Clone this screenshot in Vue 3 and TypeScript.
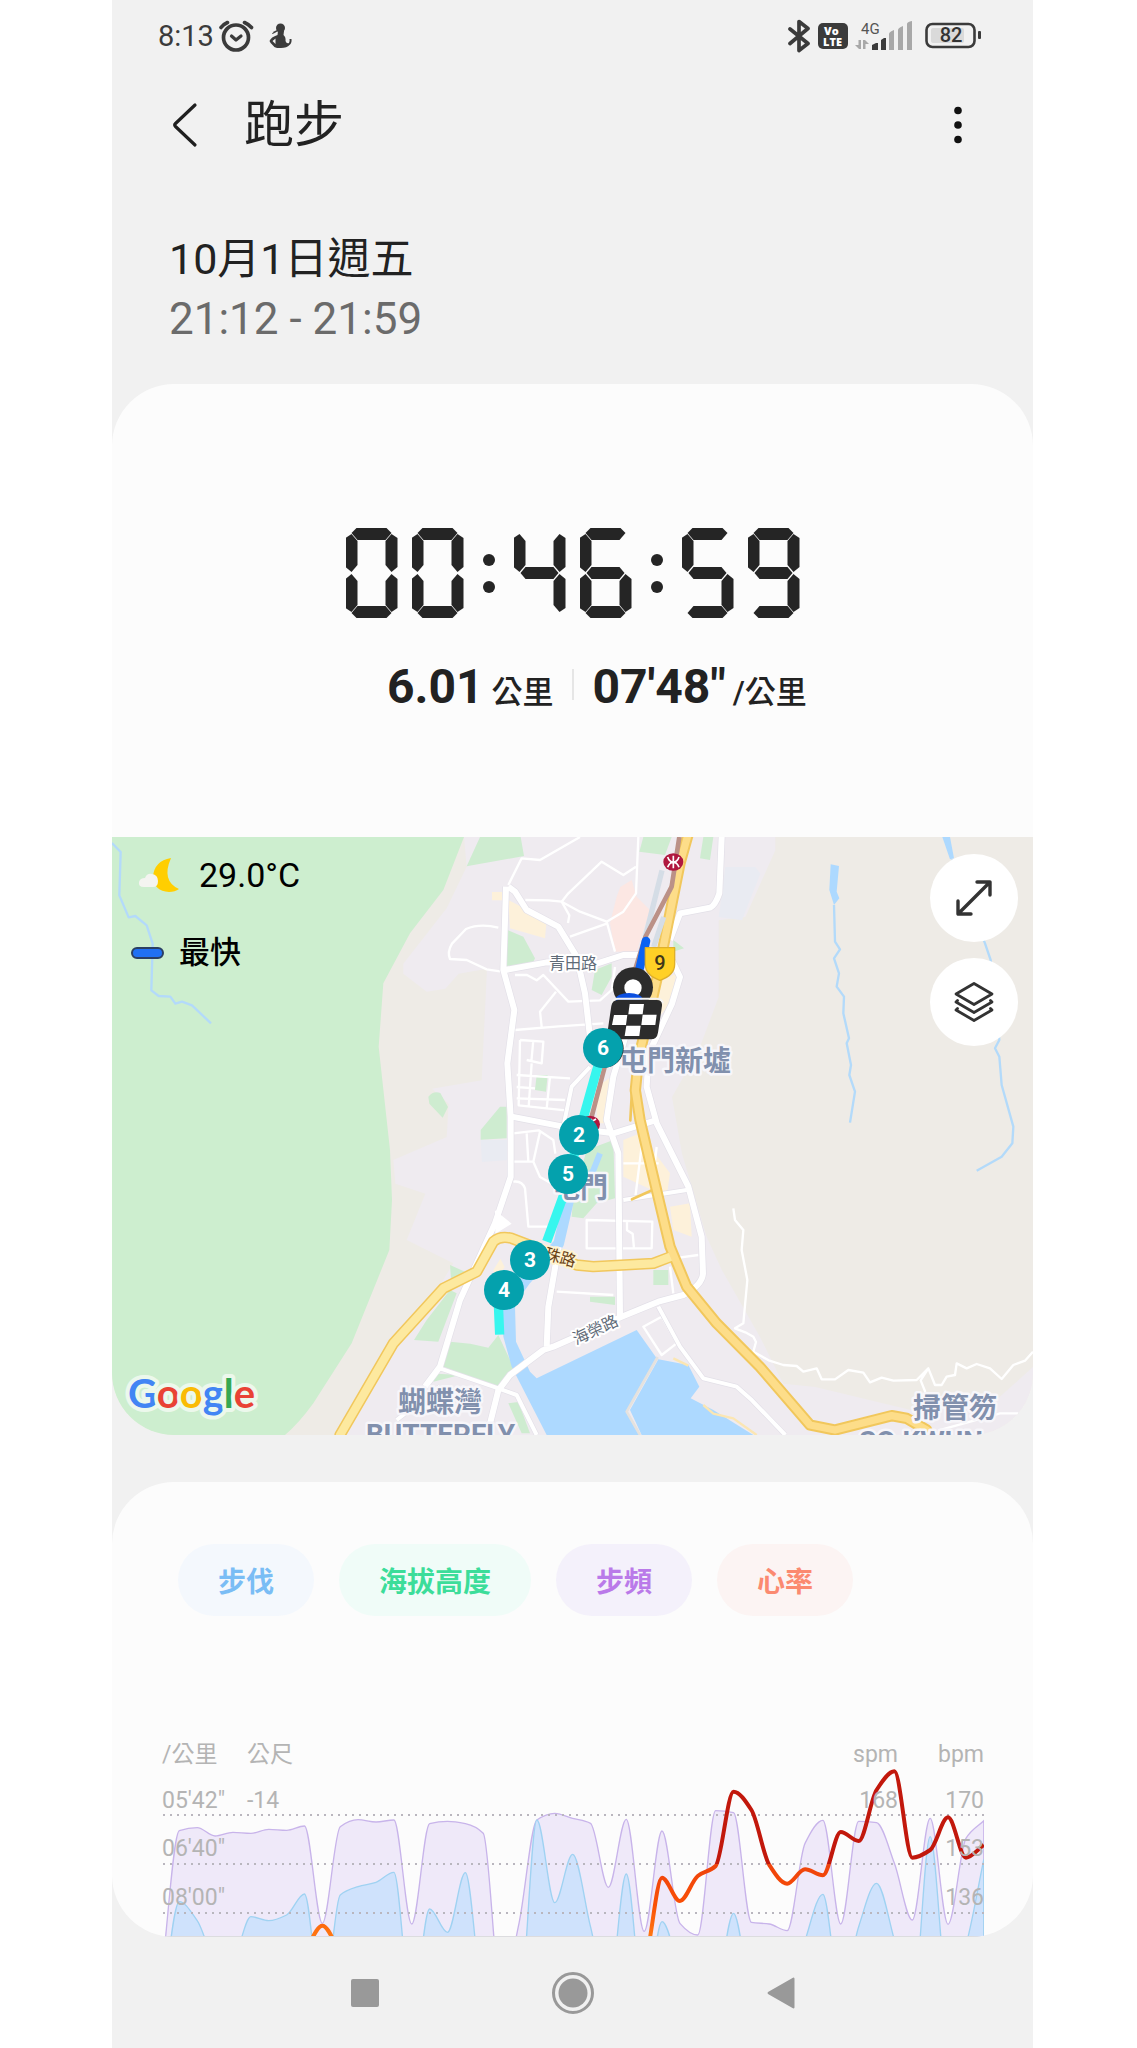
<script setup lang="ts">
import { computed } from 'vue'

/* Seven-segment clock: which bars are lit for each digit */
const LIT: Record<string, string> = {
  '0': 'abcdef',
  '1': 'bc',
  '2': 'abged',
  '3': 'abgcd',
  '4': 'fgbc',
  '5': 'afgcd',
  '6': 'afgedc',
  '7': 'abc',
  '8': 'abcdefg',
  '9': 'abcdfg',
}
const duration = '00:46:59'
const clock = computed(() =>
  duration.split('').map((ch) => ({ colon: ch === ':', bars: (LIT[ch] ?? '').split('') })),
)

const chips = [
  { label: '步伐', kind: 'pace' },
  { label: '海拔高度', kind: 'altitude' },
  { label: '步頻', kind: 'cadence' },
  { label: '心率', kind: 'heart' },
]

const markers = [
  { n: 2, x: 467, y: 298 },
  { n: 5, x: 456, y: 337 },
  { n: 6, x: 491, y: 211 },
  { n: 3, x: 418, y: 423 },
  { n: 4, x: 392, y: 453 },
]

const cadence = [
  800, 362, 353, 378, 367, 370, 358, 361, 348, 640, 350, 329, 336, 330, 642, 341, 334, 341, 370, 850,
  640, 330, 310, 325, 340, 532, 328, 664, 363, 640, 675, 302, 308, 637, 642, 662, 400, 331, 642, 334,
  338, 460, 630, 325, 643, 385, 332,
]
const pace = [
  900, 575, 632, 740, 740, 620, 632, 615, 552, 900, 555, 530, 517, 487, 900, 597, 667, 488, 860, 900,
  900, 330, 578, 433, 650, 860, 492, 900, 635, 780, 900, 850, 610, 850, 900, 900, 692, 553, 860, 650,
  520, 690, 900, 380, 850, 705, 448,
]
const heart = [
  800, 800, 800, 800, 800, 800, 800, 800, 727, 647, 727, 800, 800, 800, 800, 800, 800, 800, 800, 800,
  800, 800, 800, 800, 800, 800, 800, 760, 503, 573, 498, 468, 245, 300, 465, 521, 478, 496, 366, 393,
  240, 184, 443, 420, 322, 443, 405,
]

const STEP = 53.63
const START = 148.4

function curve(values: number[]): string {
  const n = values.length
  const slope: number[] = []
  for (let i = 0; i < n - 1; i++) slope.push((values[i + 1] - values[i]) / STEP)
  const tan: number[] = [slope[0]]
  for (let i = 1; i < n - 1; i++) {
    const a = slope[i - 1]
    const b = slope[i]
    tan.push(a * b <= 0 ? 0 : (2 * a * b) / (a + b))
  }
  tan.push(slope[n - 2])
  let d = `M${START},${values[0]}`
  for (let i = 0; i < n - 1; i++) {
    const x = START + i * STEP
    const h = STEP / 3
    d += `C${(x + h).toFixed(1)},${(values[i] + tan[i] * h).toFixed(1)} ${(x + STEP - h).toFixed(1)},${(values[i + 1] - tan[i + 1] * h).toFixed(1)} ${(x + STEP).toFixed(1)},${values[i + 1]}`
  }
  return d
}
const close = ` V1000 H${START} Z`
const cadenceLine = curve(cadence)
const paceLine = curve(pace)
const heartLine = curve(heart)

const gridRows = [
  { y: 105, text: 98, pace: "05'42\"", alt: '-14', spm: '168', bpm: '170' },
  { y: 154, text: 146, pace: "06'40\"", alt: '', spm: '', bpm: '153' },
  { y: 203, text: 195, pace: "08'00\"", alt: '', spm: '', bpm: '136' },
]
</script>

<template>
  <div class="page">
    <div class="phone">
      <header class="status">
        <span class="time">8:13</span>
        <svg class="alarm" width="36" height="34" viewBox="0 0 36 34" fill="none" stroke="#3b3b3b" stroke-linecap="round">
          <circle cx="18" cy="18.500" r="12.500" stroke-width="3.700" />
          <path d="M13.500 17 L18 21 L23 17" stroke-width="3.200" stroke-linejoin="round" />
          <path d="M3 8.500 Q5 5.500 9.500 3.500 M26.500 3.500 Q31 5.500 33.500 8.500" stroke-width="3.600" />
        </svg>
        <svg class="bird" width="24" height="28" viewBox="0 0 24 28" fill="#3b3b3b">
          <circle cx="12.500" cy="6" r="4.500" />
          <path d="M10 9 H16 L15.500 13 Q18 15 17.500 19 Q18.500 22 21 21 Q22 19 21.500 17 L23.500 17 Q24 21 21.500 23 Q19 26 13 26 Q7 26.500 5.500 24 Q2 21 1.500 19 Q3 15 9.500 13 Z M4.500 19 L7.500 22 L7.500 16.500 Z" fill-rule="evenodd" />
          <path d="M4 11.500 Q6 9 10 7.500 L10 9 Q7 11 4.500 12 Z" />
        </svg>
        <span class="spacer"></span>
        <svg width="24" height="34" viewBox="0 0 24 34" fill="none" stroke="#3b3b3b" stroke-width="3.700" stroke-linejoin="round" stroke-linecap="round">
          <path d="M3 10 L21 24.500 L12 31.500 V2.500 L21 9.500 L3 24.500" />
        </svg>
        <svg width="30" height="26" viewBox="0 0 30 26">
          <rect width="30" height="26" rx="5" fill="#3b3b3b" />
          <text x="6" y="12" class="volte">Vo</text>
          <text x="5" y="23" class="volte">LTE</text>
        </svg>
        <svg class="signal" width="58" height="32" viewBox="0 0 58 32">
          <text x="6" y="14" class="net">4G</text>
          <g fill="#a8a8a8">
            <path d="M28 14 Q28 12 33 10 V30 H28 Z M37 10 Q37 8 42 6 V30 H37 Z M46 4 Q46 2 51 1 V30 H46 Z" transform="translate(6 0)" />
            <path d="M3.500 20 H6 V29 H4 L0 25 H3.500 Z M8 20 H10 L14 24 H10.500 V29 H8 Z" />
          </g>
          <g fill="#3b3b3b">
            <path d="M17 30 V25 L21 23 H23 V30 Z M26 30 V20 L29 18 H31 V30 Z" />
          </g>
        </svg>
        <svg class="battery" width="57" height="28" viewBox="0 0 57 28">
          <rect x="1.500" y="2" width="48" height="23" rx="6" fill="none" stroke="#3b3b3b" stroke-width="2.600" />
          <rect x="6" y="6" width="33" height="15" rx="2" fill="#dadada" />
          <rect x="53" y="9" width="3" height="8" rx="1" fill="#3b3b3b" />
          <text x="26" y="20" class="charge">82</text>
        </svg>
      </header>

      <div class="titlebar">
        <button class="icon-btn" type="button" aria-label="返回">
          <svg width="28" height="48" viewBox="0 0 28 48" fill="none" stroke="#1f1f1f" stroke-width="3.200" stroke-linecap="round" stroke-linejoin="round">
            <path d="M24 4 L4.500 22.500 Q3 24 4.500 25.500 L24 44" />
          </svg>
        </button>
        <h1>跑步</h1>
        <button class="icon-btn more" type="button" aria-label="更多選項">
          <svg width="12" height="40" viewBox="0 0 12 40" fill="#111">
            <circle cx="6" cy="5.500" r="3.800" />
            <circle cx="6" cy="20" r="3.800" />
            <circle cx="6" cy="34.500" r="3.800" />
          </svg>
        </button>
      </div>

      <div class="when">
        <p class="date">10月1日週五</p>
        <p class="span">21:12 - 21:59</p>
      </div>

      <section class="card summary">
        <div class="clock" role="img" :aria-label="duration">
          <template v-for="(c, i) in clock" :key="i">
            <div v-if="c.colon" class="colon"><i></i><i></i></div>
            <div v-else class="digit"><i v-for="b in c.bars" :key="b" :class="'bar-' + b"></i></div>
          </template>
        </div>
        <div class="stats">
          <p class="stat dist"><b>6.01</b><span>公里</span></p>
          <hr />
          <p class="stat pace"><b>07'48"</b><span>/公里</span></p>
        </div>

        <div class="map">
          <svg class="map-art" viewBox="0 0 921 598">
            <svg width="921" height="598" viewBox="0 0 2763 1794" fill="none" stroke-linejoin="round">
              <rect width="2763" height="1794" fill="#eeebe6" />
              <path fill="#efebf0" d="M1056,0 L1064,89 1004,214 874,380 874,410 944,464 1000,455 1040,410 1125,395 1109,730 960,755 1010,800 1004,900 844,969 850,1040 940,1070 884,1209 1024,1279 950,1400 854,1529 694,1794 H2763 V1590 L2640,1700 2400,1720 2110,1650 2014,1640 1944,1500 1830,1300 1784,1200 1710,950 1680,780 1760,640 1820,480 1820,250 1900,240 1990,40 1990,0Z" />
              <path fill="#e9ebf2" d="M1840,90 H1930 L1945,110 1890,250 1820,240Z M1106,909 H1190 V969 L1110,975Z" />
              <path fill="#cdeecf" d="M0,0 H1056 L994,159 894,289 814,439 800,629 834,939 840,1089 832,1239 719,1519 604,1699 Q560,1760 519,1794 H0Z" />
              <path fill="#ceecd0" d="M1104,0 H1226 L1236,57 1064,88Z M1594,0 H1679 L1659,54 1582,44Z M1774,0 H1804 L1794,69 1764,64Z M1186,279 L1234,299 1269,364 1260,384 1184,394Z M1499,379 V419 L1469,474 1439,459 1449,399Z M1684,309 L1716,334 1684,344Z M1274,714 H1307 L1302,764 1269,759Z M949,779 Q965,760 985,768 L1008,810 992,842 952,800Z M1106,879 L1164,809 H1184 V904 L1106,908Z M1424,939 L1504,909 1509,1084 1454,1099 1414,1144 1379,1139 1384,1079Z M1014,1284 L1059,1304 1054,1324 1018,1339Z M1014,1359 L1034,1369 979,1514 906,1509 944,1449Z M1014,1514 L1075,1520 1129,1532 1159,1494 1204,1590 1194,1630 1165,1654 994,1589Z M1624,1299 H1669 V1344 H1624Z M1434,1379 H1509 V1404 L1434,1394Z M1189,1699 L1219,1695 1254,1789 1229,1789Z M975,1610 L1044,1614 964,1634Z" />
              <path fill="#fce7e3" d="M1514,179 L1525,150 1559,129 1574,179 1614,219 1574,344 1509,344 1494,259Z" />
              <path fill="#fdf1da" d="M1189,189 L1304,249 1299,304 1194,274Z M1140,165 H1170 V190 H1140Z M1634,439 L1694,409 1674,499 1634,549Z M1534,909 L1584,889 1674,1009 1664,1079 1534,1019Z M1674,1109 L1734,1099 1739,1199 1684,1179Z M1454,749 L1499,719 1484,859 1454,859Z M1144,1300 L1165,1265 1178,1290 1150,1330Z" />
              <g stroke="#fff" stroke-width="7">
                <path d="M1189,144 L1229,64 1284,69 1404,0" />
                <path d="M1579,0 L1572,169 1534,224 1484,254 1404,224 1349,194 1369,169 1469,74 1534,114 1572,89" />
                <path d="M1349,194 L1310,190 1240,189 M1349,194 L1372,235 1368,258 M1484,254 L1509,344 M1374,299 L1484,260" />
                <path d="M1159,272 Q1104,258 1062,276 L1020,320 Q1005,345 1014,366 L1064,369 1124,397 1164,403" />
                <path d="M1209,414 H1245 L1274,430 1294,414 1369,494 1464,490 1499,459 1509,390 M1332,464 L1284,524 1289,569 M1209,579 L1340,568 1474,559" />
                <path d="M1224,609 L1294,614 1289,679 1244,669 M1224,609 L1220,805 1360,820 M1264,609 L1258,675 M1214,714 L1374,724 M1214,750 L1269,754 M1214,784 L1359,789 M1259,679 L1250,810 M1314,719 L1304,815" />
                <path d="M1204,889 L1280,880 1324,909 1330,950 M1244,889 L1249,974 M1284,884 L1264,974 M1204,974 H1264 L1284,1020 1320,1040 M1204,1034 Q1230,1030 1239,1054 L1249,1169 H1310" />
                <path d="M1424,1149 L1621,1154 1619,1234 1424,1234Z M1545,1152 V1180 L1562,1190 1566,1234 M1334,1364 L1504,1374 M1594,1469 L1649,1439 1694,1519 1649,1554Z M1674,1289 L1684,1369 M1684,1264 L1759,1254 M1534,979 H1640 M1590,920 L1570,1080 M1634,930 L1620,1050" />
                <path d="M1864,1114 L1869,1149 1894,1179 1889,1239 1906,1329 1894,1459 1869,1474 1900,1486 1924,1499 1932,1515 1924,1544 1970,1570 2014,1584 2054,1587 2074,1604 2114,1594 2129,1627 2169,1627 2209,1599 2254,1607 2274,1636 2309,1622 2344,1631 2414,1629 2449,1594 2469,1644 2489,1644 2504,1619 2529,1614 2534,1579 2564,1594 2594,1581 2634,1594 2669,1626 2704,1584 2739,1571 2763,1544 M2449,1594 L2426,1630 2440,1665 M2480,1780 L2664,1729 2719,1729" />
              </g>
              <path fill="#add9ff" d="M1274,1624 L1574,1479 1634,1564 1544,1724 1584,1794 1304,1794 1199,1589 1174,1499 1168,1409 1209,1409 1212,1514 1254,1604Z M1639,1567 L1729,1584 1762,1649 1736,1684 1804,1719 1924,1794 1589,1794 1554,1719Z" />
              <path stroke="#e5e2de" stroke-width="8" d="M1637,1560 L1544,1724 1584,1794" />
              <path stroke="#fbe6b3" stroke-width="7" d="M1684,1564 L1729,1586 M1774,1704 L1804,1730 1864,1744 1934,1794" />
              <path stroke="#add9ff" stroke-width="32" d="M1370,1090 L1340,1220 1240,1330 1190,1400" />
              <path stroke="#add9ff" stroke-width="18" d="M1464,949 L1444,1000 1370,1090" />
              <path stroke="#b3dafa" stroke-width="7" d="M0,18 L26,45 22,175 50,241 70,237 104,265 122,320 118,460 140,477 175,479 190,500 210,494 240,505 297,559 M2166,204 L2169,314 2184,337 2166,364 2181,409 2174,449 2196,479 2194,529 2211,604 2204,619 2217,684 2212,714 2229,764 2214,857 M2520,67 L2619,319 2636,369 2662,609 2649,634 2662,659 2669,744 2704,869 2701,919 2669,959 2594,1001" />
              <path fill="#add9ff" d="M2156,82 L2181,87 2174,164 2182,184 2166,204 2152,159Z M2491,0 H2514 L2526,64 2514,67Z" />
              <g v-for="(tone, i) in ['#e3e0e8', '#ffffff']" :key="tone" :stroke="tone">
                <path :stroke-width="i ? 18 : 22" d="M1182,149 L1179,249 1174,399 1207,519 1186,679 1196,839 1196,1020 1149,1159 1044,1389 984,1589 939,1649 M1189,149 L1209,164 1244,219 1339,269 1394,359 1419,469 1434,600 M1179,399 L1304,376 1454,380 1534,354 1594,354 M1829,0 L1822,169 Q1810,205 1794,212 L1704,229 1674,309" />
                <path :stroke-width="i ? 18 : 22" d="M1129,1780 L1159,1660 1194,1614 1294,1539 1324,1529 1529,1439 1639,1394 1714,1374 Q1770,1345 1773,1310 L1769,1199 1729,1049 1634,859 1604,749 1610,650 1680,500 1704,420 1680,370 M1304,1529 L1309,1409 1340,1230 M1524,1439 L1519,949 1484,849 1504,719 1540,600 M1199,839 L1354,869 1504,889 1634,849" />
                <path :stroke-width="i ? 12 : 16" d="M984,1594 L1159,1654 1214,1674 1274,1794 M984,1649 L854,1749 M1434,690 L1379,749 1354,869 M1639,1409 L1704,1529 1774,1624 1874,1649 1920,1690 2020,1794 M1534,1089 L1724,1059" />
              </g>
              <path fill="#fff" d="M1149,1120 L1199,1160 1150,1190Z" />
              <g stroke-linecap="round">
                <path stroke="#f1c75c" stroke-width="34" d="M684,1794 L844,1519 994,1354 1094,1304 1144,1214 Q1165,1195 1199,1204 L1254,1225 1394,1284 1444,1289 1624,1279 1674,1260" />
                <path stroke="#f1c75c" stroke-width="34" d="M1729,-10 L1704,79 1664,279 1634,429 1600,579 1580,660 1570,760 1584,849 1624,1019 1674,1229 1724,1349 1814,1459 1944,1590 2094,1764 2169,1779 2339,1736 2384,1744 2444,1779" />
                <path stroke="#f1c75c" stroke-width="8" d="M1620,1060 L1560,1087 M1560,760 L1555,850" />
                <path stroke="#fde99f" stroke-width="25" d="M684,1794 L844,1519 994,1354 1094,1304 1144,1214 Q1165,1195 1199,1204 L1254,1225 1394,1284 1444,1289 1624,1279 1674,1260" />
                <path stroke="#fddd89" stroke-width="22" d="M1729,-10 L1704,79 1664,279 1634,429 1600,579 1580,660 1570,760 1584,849 1624,1019 1674,1229 1724,1349 1814,1459 1944,1590 2094,1764 2169,1779 2339,1736 2384,1744 2444,1779" />
              </g>
              <path stroke="#d5dde6" stroke-width="16" d="M1650,100 L1600,300 M1655,240 L1625,330" />
              <path stroke="#bb9187" stroke-width="14" d="M1702,0 L1679,149 1600,300 1478,690 1439,839" />
              <path stroke="#37f6ee" stroke-width="28" d="M1470,650 L1454,700 1412,850 1360,1060 1304,1214 M1159,1400 L1163,1493" />
              <path stroke="#0b62f2" stroke-width="26" stroke-linecap="round" d="M1602,312 L1584,390 1560,470" />
              <g>
                <ellipse cx="1684" cy="75" rx="30" ry="26" fill="#b0183f" />
                <path stroke="#fff" stroke-width="5" d="M1684,56 V94 M1667,60 Q1672,75 1684,75 Q1696,75 1701,60 M1667,91 Q1672,76 1684,76 Q1696,76 1701,91 M1674,75 H1694" />
                <ellipse cx="1434" cy="862" rx="30" ry="26" fill="#b0183f" />
                <path stroke="#fff" stroke-width="5" d="M1436,846 L1442,852 1452,846" />
              </g>
              <path fill="#ffd026" stroke="#dfb02a" stroke-width="4" d="M1600,332 H1688 V382 Q1688,415 1644,430 Q1600,415 1600,382Z" />
            </svg>

            <g class="place">
              <text x="507" y="234">屯門新墟</text>
              <text x="440" y="361">屯門</text>
              <text x="286" y="575">蝴蝶灣</text>
              <text x="801" y="581">掃管笏</text>
              <text x="254" y="607" class="latin">BUTTERFLY</text>
              <text x="747" y="614" class="latin">SO KWUN</text>
            </g>
            <text x="437" y="132" class="road">青田路</text>
            <text x="464" y="508" class="road" transform="rotate(-25 464 508)">海榮路</text>
            <text x="416" y="417" class="road brown" transform="rotate(16 416 417)">海珠路</text>
            <text x="548" y="133" class="route">9</text>

            <g transform="translate(368 -7) scale(0.3333)">
              <circle cx="459" cy="472" r="60" fill="#2c2c2c" />
              <circle cx="459" cy="474" r="26" fill="#fff" />
              <ellipse cx="447" cy="508" rx="40" ry="19" fill="#0b4fe0" />
              <path fill="none" stroke="#f4f4f4" stroke-width="6" d="M394,520 Q398,506 414,506 H530 Q546,506 549,520" />
              <path fill="#2c2c2c" d="M414,510 H530 Q548,510 546,528 L534,608 Q531,628 512,628 H398 Q380,628 382,610 L394,528 Q397,510 414,510Z" />
              <path fill="#fff" d="M449,522 H492 L488,553 H445Z M402,555 H442 L438,585 H396Z M488,554 H530 L526,585 H484Z M439,587 H482 L478,618 H434Z" />
              <circle cx="373" cy="655" r="58" fill="#2c2c2c" />
            </g>
            <g v-for="m in markers" :key="m.n">
              <circle :cx="m.x" :cy="m.y" r="20" fill="#04a1ad" />
              <text :x="m.x" :y="m.y + 7" class="km">{{ m.n }}</text>
            </g>
            <text x="16" y="571" class="google"><tspan fill="#4285f4">G</tspan><tspan fill="#e94235">o</tspan><tspan fill="#fabb05">o</tspan><tspan fill="#4285f4">g</tspan><tspan fill="#34a853">l</tspan><tspan fill="#e94235">e</tspan></text>
          </svg>

          <div class="weather">
            <svg width="42" height="36" viewBox="0 0 42 36">
              <path fill="#ffce00" d="M34 1 Q17 4 16 20 Q17 34 32 35 Q38 35 42 32 Q24 24 34 1Z" />
              <path fill="#f4f4f1" d="M7 30 Q1 30 2 25 Q3 21 8 21 Q10 16 15 17 Q21 18 21 24 Q21 30 16 30Z" />
            </svg>
            <span>29.0°C</span>
          </div>
          <div class="fastest"><i></i><span>最快</span></div>

          <div class="tools">
            <button type="button" aria-label="放大地圖">
              <svg width="40" height="40" viewBox="0 0 40 40" fill="none" stroke="#333" stroke-width="3.400" stroke-linecap="round" stroke-linejoin="round">
                <path d="M4 36 L36 4 M23 4 H36 V17 M17 36 H4 V23" />
              </svg>
            </button>
            <button type="button" aria-label="圖層">
              <svg width="42" height="42" viewBox="0 0 42 42" fill="none" stroke="#333" stroke-width="2.800" stroke-linecap="round" stroke-linejoin="round">
                <path d="M21 2.500 L39 13 L21 23.500 L3 13Z" />
                <path d="M4.500 19.500 L3 21 L21 31.500 L39 21 L37.500 19.500 M4.500 27.500 L3 29 L21 39.500 L39 29 L37.500 27.500" />
              </svg>
            </button>
          </div>
        </div>
      </section>

      <section class="card graph">
        <div class="chips">
          <button v-for="c in chips" :key="c.kind" type="button" :class="['chip', c.kind]">{{ c.label }}</button>
        </div>
        <svg class="chart" viewBox="0 0 921 227">
          <defs>
            <linearGradient id="zones" gradientUnits="userSpaceOnUse" x1="0" y1="184" x2="0" y2="684">
              <stop offset="0" stop-color="#c2180c" />
              <stop offset=".555" stop-color="#c2180c" />
              <stop offset=".556" stop-color="#ee430c" />
              <stop offset=".8" stop-color="#fa5006" />
              <stop offset="1" stop-color="#ff7a14" />
            </linearGradient>
          </defs>
          <svg x="0" y="0" width="872" height="227" viewBox="-6 0 2616 681" preserveAspectRatio="none" fill="none">
            <g transform="translate(-6 0)">
              <path :d="cadenceLine + close" fill="#efe9f9" stroke="#c8b4ea" stroke-width="4" />
              <path :d="paceLine + close" fill="#cfe2fc" stroke="#9fd2f2" stroke-width="4" />
            </g>
          </svg>
          <line v-for="r in gridRows" :key="r.y" x1="51" x2="872" :y1="r.y" :y2="r.y" class="dots" />
          <g class="axis">
            <text x="50" y="52">/公里</text>
            <text x="135" y="52">公尺</text>
            <text x="786" y="52" class="end">spm</text>
            <text x="872" y="52" class="end">bpm</text>
          </g>
          <svg x="0" y="0" width="872" height="227" viewBox="-6 0 2616 681" preserveAspectRatio="none" fill="none">
            <path transform="translate(-6 0)" :d="heartLine" stroke="url(#zones)" stroke-width="12" stroke-linejoin="round" />
          </svg>
          <g v-for="r in gridRows" :key="r.text" class="axis">
            <text x="50" :y="r.text">{{ r.pace }}</text>
            <text x="135" :y="r.text">{{ r.alt }}</text>
            <text x="786" :y="r.text" class="end">{{ r.spm }}</text>
            <text x="872" :y="r.text" class="end">{{ r.bpm }}</text>
          </g>
          <line x1="43" x2="880" y1="226.500" y2="226.500" stroke="#dcdcdf" />
        </svg>
      </section>

      <nav class="nav">
        <button type="button" aria-label="最近使用">
          <svg width="28" height="28" viewBox="0 0 28 28"><rect width="28" height="28" rx="2" fill="#999" /></svg>
        </button>
        <button type="button" aria-label="主畫面">
          <svg width="44" height="44" viewBox="0 0 44 44"><circle cx="22" cy="22" r="19.500" fill="none" stroke="#999" stroke-width="3" /><circle cx="22" cy="22" r="14.500" fill="#999" /></svg>
        </button>
        <button type="button" aria-label="返回上一頁">
          <svg width="28" height="32" viewBox="0 0 28 32"><path d="M27.500 1.500 V30.500 Q27 32 25.500 31 L1 17 Q0 16 1 15 L25.500 1 Q27 0 27.500 1.500Z" fill="#999" /></svg>
        </button>
      </nav>
    </div>
  </div>
</template>

<style>
body {
  margin: 0;
  background: #fff;
}
</style>

<style scoped>
.page {
  box-sizing: border-box;
  padding: 0 104px 0 112px;
  font-family: Roboto, "Noto Sans CJK TC", sans-serif;
  color: #222;
}
.phone {
  background: #f1f1f1;
}
p,
h1 {
  margin: 0;
}
button {
  padding: 0;
  border: 0;
  background: none;
  font: inherit;
  display: flex;
  align-items: center;
  justify-content: center;
}
svg {
  display: block;
  flex: none;
}

.status {
  display: flex;
  align-items: center;
  height: 72px;
  padding: 0 51px 0 46px;
}
.time {
  font-size: 29px;
  line-height: 36px;
  color: #3b3b3b;
}
.alarm {
  margin-left: 4px;
}
.bird {
  margin-left: 14px;
}
.spacer {
  flex: 1;
}
.status svg + svg {
  margin-left: 7px;
}
.status .alarm + .bird {
  margin-left: 14px;
}
.status .battery {
  margin-left: 12px;
}
.volte {
  font-size: 11px;
  font-weight: 800;
  font-family: "Open Sans", sans-serif;
  fill: #fff;
}
.net {
  font-size: 15px;
  fill: #555;
}
.charge {
  font-size: 20px;
  font-weight: 500;
  fill: #333;
  text-anchor: middle;
}

.titlebar {
  display: flex;
  align-items: center;
  height: 106px;
  padding: 0 53px 0 57px;
}
.icon-btn {
  width: 32px;
  height: 56px;
}
h1 {
  flex: 1;
  margin-left: 43px;
  font-size: 50px;
  line-height: 64px;
  font-weight: 400;
}
.icon-btn.more {
  width: 44px;
}

.when {
  padding: 51px 57px 35px;
  font-size: 44px;
  line-height: 60px;
}
.date {
  font-size: 43px;
}
.span {
  color: #6b6b6b;
}

.card {
  background: #fcfcfc;
  border-radius: 62px;
  overflow: hidden;
}
.summary {
  padding-top: 144px;
}

.clock {
  display: flex;
  justify-content: center;
  gap: 14px;
  height: 90px;
}
.digit {
  position: relative;
  width: 52px;
}
.digit i {
  position: absolute;
  left: 0;
  top: 0;
  width: 52px;
  height: 90px;
  background: #252525;
}
.bar-a {
  clip-path: polygon(6px 5px, 11px 0, 41px 0, 46px 5px, 40px 12px, 12px 12px);
}
.bar-f {
  clip-path: polygon(0 10px, 6px 6px, 12px 13px, 12px 37px, 6px 44px, 0 39px);
}
.bar-b {
  clip-path: polygon(52px 10px, 46px 6px, 40px 13px, 40px 37px, 46px 44px, 52px 39px);
}
.bar-g {
  clip-path: polygon(7px 45px, 12px 39px, 40px 39px, 45px 45px, 40px 51px, 12px 51px);
}
.bar-e {
  clip-path: polygon(0 80px, 6px 84px, 12px 77px, 12px 53px, 6px 46px, 0 51px);
}
.bar-c {
  clip-path: polygon(52px 80px, 46px 84px, 40px 77px, 40px 53px, 46px 46px, 52px 51px);
}
.bar-d {
  clip-path: polygon(6px 85px, 11px 90px, 41px 90px, 46px 85px, 40px 78px, 12px 78px);
}
.colon {
  display: flex;
  flex-direction: column;
  align-items: center;
  gap: 15px;
  width: 22px;
  padding-top: 26px;
}
.colon i {
  width: 12px;
  height: 12px;
  border-radius: 50%;
  background: #252525;
}

.stats {
  display: grid;
  grid-template-columns: 1fr 2px 1fr;
  margin-top: 41px;
  padding-bottom: 116px;
  line-height: 56px;
}
.stats hr {
  width: 2px;
  height: 31px;
  margin: 10px 0 0;
  border: 0;
  background: #e6e6e6;
}
.stat {
  display: flex;
  align-items: baseline;
}
.stat b {
  font-size: 48px;
  font-weight: 700;
}
.stat span {
  font-size: 31px;
  font-weight: 500;
}
.stat.dist {
  justify-content: flex-end;
  gap: 8px;
  padding-right: 18px;
}
.stat.pace {
  gap: 7px;
  padding-left: 19px;
}

.map {
  position: relative;
}
.map-art {
  width: 100%;
  height: auto;
}
.place text {
  font-size: 28px;
  font-weight: 700;
  fill: #8190ad;
  stroke: #f7f6fa;
  stroke-width: 5px;
  paint-order: stroke;
  stroke-linejoin: round;
}
.road {
  font-size: 16px;
  fill: #5f6b78;
  stroke: #fff;
  stroke-width: 4px;
  paint-order: stroke;
  stroke-linejoin: round;
}
.brown {
  fill: #6b4216;
  stroke: #fff4cf;
}
.route {
  font-size: 20px;
  font-weight: 500;
  fill: #40361a;
  text-anchor: middle;
}
.km {
  font-size: 21px;
  font-weight: 700;
  fill: #fff;
  text-anchor: middle;
}
.google {
  font-family: Lato, sans-serif;
  font-size: 40px;
  font-weight: 700;
  stroke: #ecf8ec;
  stroke-width: 8px;
  paint-order: stroke;
  stroke-linejoin: round;
}
.weather {
  position: absolute;
  left: 25px;
  top: 18px;
  display: flex;
  align-items: center;
  gap: 20px;
  font-size: 34px;
  line-height: 40px;
  color: #000;
}
.fastest {
  position: absolute;
  left: 19px;
  top: 96px;
  display: flex;
  align-items: center;
  gap: 15px;
  font-size: 31px;
  line-height: 40px;
  font-weight: 500;
  color: #000;
}
.fastest i {
  box-sizing: border-box;
  width: 33px;
  height: 12px;
  border: 2px solid #2b3f63;
  border-radius: 6px;
  background: #2070f3;
}
.tools {
  position: absolute;
  right: 15px;
  top: 17px;
  display: flex;
  flex-direction: column;
  gap: 16px;
}
.tools button {
  width: 88px;
  height: 88px;
  border-radius: 50%;
  background: #fff;
}

.graph {
  margin-top: 47px;
  padding-top: 62px;
}
.chips {
  display: flex;
  gap: 25px;
  padding-left: 66px;
}
.chip {
  height: 72px;
  padding: 0 40px;
  border-radius: 36px;
  font-size: 28px;
  font-weight: 700;
}
.chip.pace {
  background: #f4f8fd;
  color: #7abdf5;
}
.chip.altitude {
  background: #f0fcf8;
  color: #3cdd9a;
}
.chip.cadence {
  background: #f4f1fb;
  color: #ba7ae9;
}
.chip.heart {
  background: #fcf4f3;
  color: #fb8a70;
}
.chart {
  width: 100%;
  height: auto;
  margin-top: 94px;
}
.dots {
  stroke: #b9b6be;
  stroke-width: 2px;
  stroke-dasharray: 2 5;
}
.axis {
  font-size: 23px;
  fill: #b4b4b4;
}
.end {
  text-anchor: end;
}

.nav {
  display: flex;
  align-items: center;
  justify-content: center;
  gap: 160px;
  height: 111px;
}
.nav button {
  width: 48px;
  height: 48px;
}
</style>
